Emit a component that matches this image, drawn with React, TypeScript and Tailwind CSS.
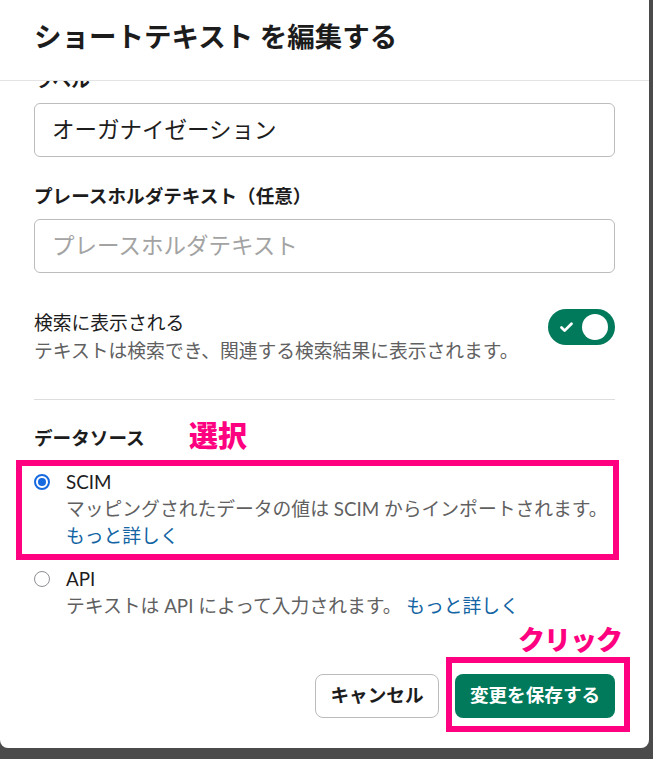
import { Check } from 'lucide-react';

const font = { fontFamily: 'Lato, "Noto Sans CJK JP", sans-serif' };

function Radio({ checked }: { checked: boolean }) {
  if (checked) {
    return (
      <span className="flex h-[16px] w-[16px] items-center justify-center rounded-full border-2 border-[#1769e0]">
        <span className="h-[8px] w-[8px] rounded-full bg-[#1769e0]" />
      </span>
    );
  }
  return <span className="h-[16px] w-[16px] rounded-full border-[1.5px] border-[#8e8e95]" />;
}

function Toggle() {
  return (
    <div className="flex h-[36px] w-[67px] shrink-0 items-center justify-between rounded-full bg-[#007a5a] pl-[11px] pr-[7px]">
      <Check className="h-[15px] w-[15px] text-white" strokeWidth={4.5} />
      <span className="h-[26px] w-[26px] rounded-full bg-white" />
    </div>
  );
}

export default function App() {
  return (
    <div className="h-[759px] w-[653px] bg-[#4b4b4b]" style={font}>
      <div className="flex h-[748px] w-[649px] flex-col overflow-hidden rounded-b-lg bg-white text-[#1d1c1d]">
        <div className="flex h-[81px] shrink-0 items-start border-b border-[#e4e4e4] px-[34px] pt-[17px]">
          <h1 className="text-[27.5px] font-bold leading-[40px]">ショートテキスト を編集する</h1>
        </div>

        <div className="flex flex-1 flex-col overflow-hidden px-[34px]">
          <div className="mt-[-14px] text-[18.6px] font-bold leading-[26px]">ラベル</div>
          <div className="mt-[10px] flex h-[54px] items-center rounded-md border border-[#bcbcbc] px-[17px] text-[22.5px]">
            オーガナイゼーション
          </div>

          <div className="mt-[26px] text-[18.6px] font-bold leading-[26px]">プレースホルダテキスト（任意）</div>
          <div className="mt-[10px] flex h-[54px] items-center rounded-md border border-[#bcbcbc] px-[17px] text-[22.5px] text-[#a3a3a3]">
            プレースホルダテキスト
          </div>

          <div className="mt-[36px] flex items-start justify-between">
            <div>
              <div className="text-[18.8px] leading-[28px]">検索に表示される</div>
              <div className="text-[18.8px] leading-[28px] text-[#616061]">
                テキストは検索でき、関連する検索結果に表示されます。
              </div>
            </div>
            <Toggle />
          </div>

          <div className="mt-[34px] h-px bg-[#dddddd]" />

          <div className="relative mt-[25px] text-[18.6px] font-bold leading-[26px]">
            データソース
            <span className="absolute left-[155px] top-[-9px] text-[29px] font-black leading-[40px] text-[#ff0080]">
              選択
            </span>
          </div>

          <div className="relative mt-[17px] flex gap-[16px] text-[18.8px] leading-[27px]">
            <div className="absolute bottom-[-11px] left-[-18px] right-[-4px] top-[-8px] border-[6px] border-[#ff0080]" />
            <div className="flex h-[27px] items-center">
              <Radio checked />
            </div>
            <div>
              <div>SCIM</div>
              <div className="text-[#616061]">マッピングされたデータの値は SCIM からインポートされます。</div>
              <div className="text-[#1264a3]">もっと詳しく</div>
            </div>
          </div>

          <div className="mt-[16px] flex gap-[16px] text-[18.8px] leading-[27px]">
            <div className="flex h-[27px] items-center">
              <Radio checked={false} />
            </div>
            <div>
              <div>API</div>
              <div className="text-[#616061]">
                テキストは API によって入力されます。 <span className="text-[#1264a3]">もっと詳しく</span>
              </div>
            </div>
          </div>

          <div className="mt-[55px] flex justify-end gap-[16px]">
            <button className="h-[44px] w-[124px] rounded-lg border border-[#bbbbbb] bg-white text-[18.6px] font-bold">
              キャンセル
            </button>
            <div className="relative">
              <span className="absolute right-[-7px] top-[-54px] whitespace-nowrap text-[27px] font-black leading-[40px] tracking-[-1px] text-[#ff0080]">
                クリック
              </span>
              <div className="absolute bottom-[-14px] left-[-9px] right-[-15px] top-[-17px] border-[6px] border-[#ff0080]" />
              <button className="relative h-[44px] w-[160px] rounded-lg bg-[#007a5a] text-[18.6px] font-bold text-white">
                変更を保存する
              </button>
            </div>
          </div>
        </div>
      </div>
    </div>
  );
}
